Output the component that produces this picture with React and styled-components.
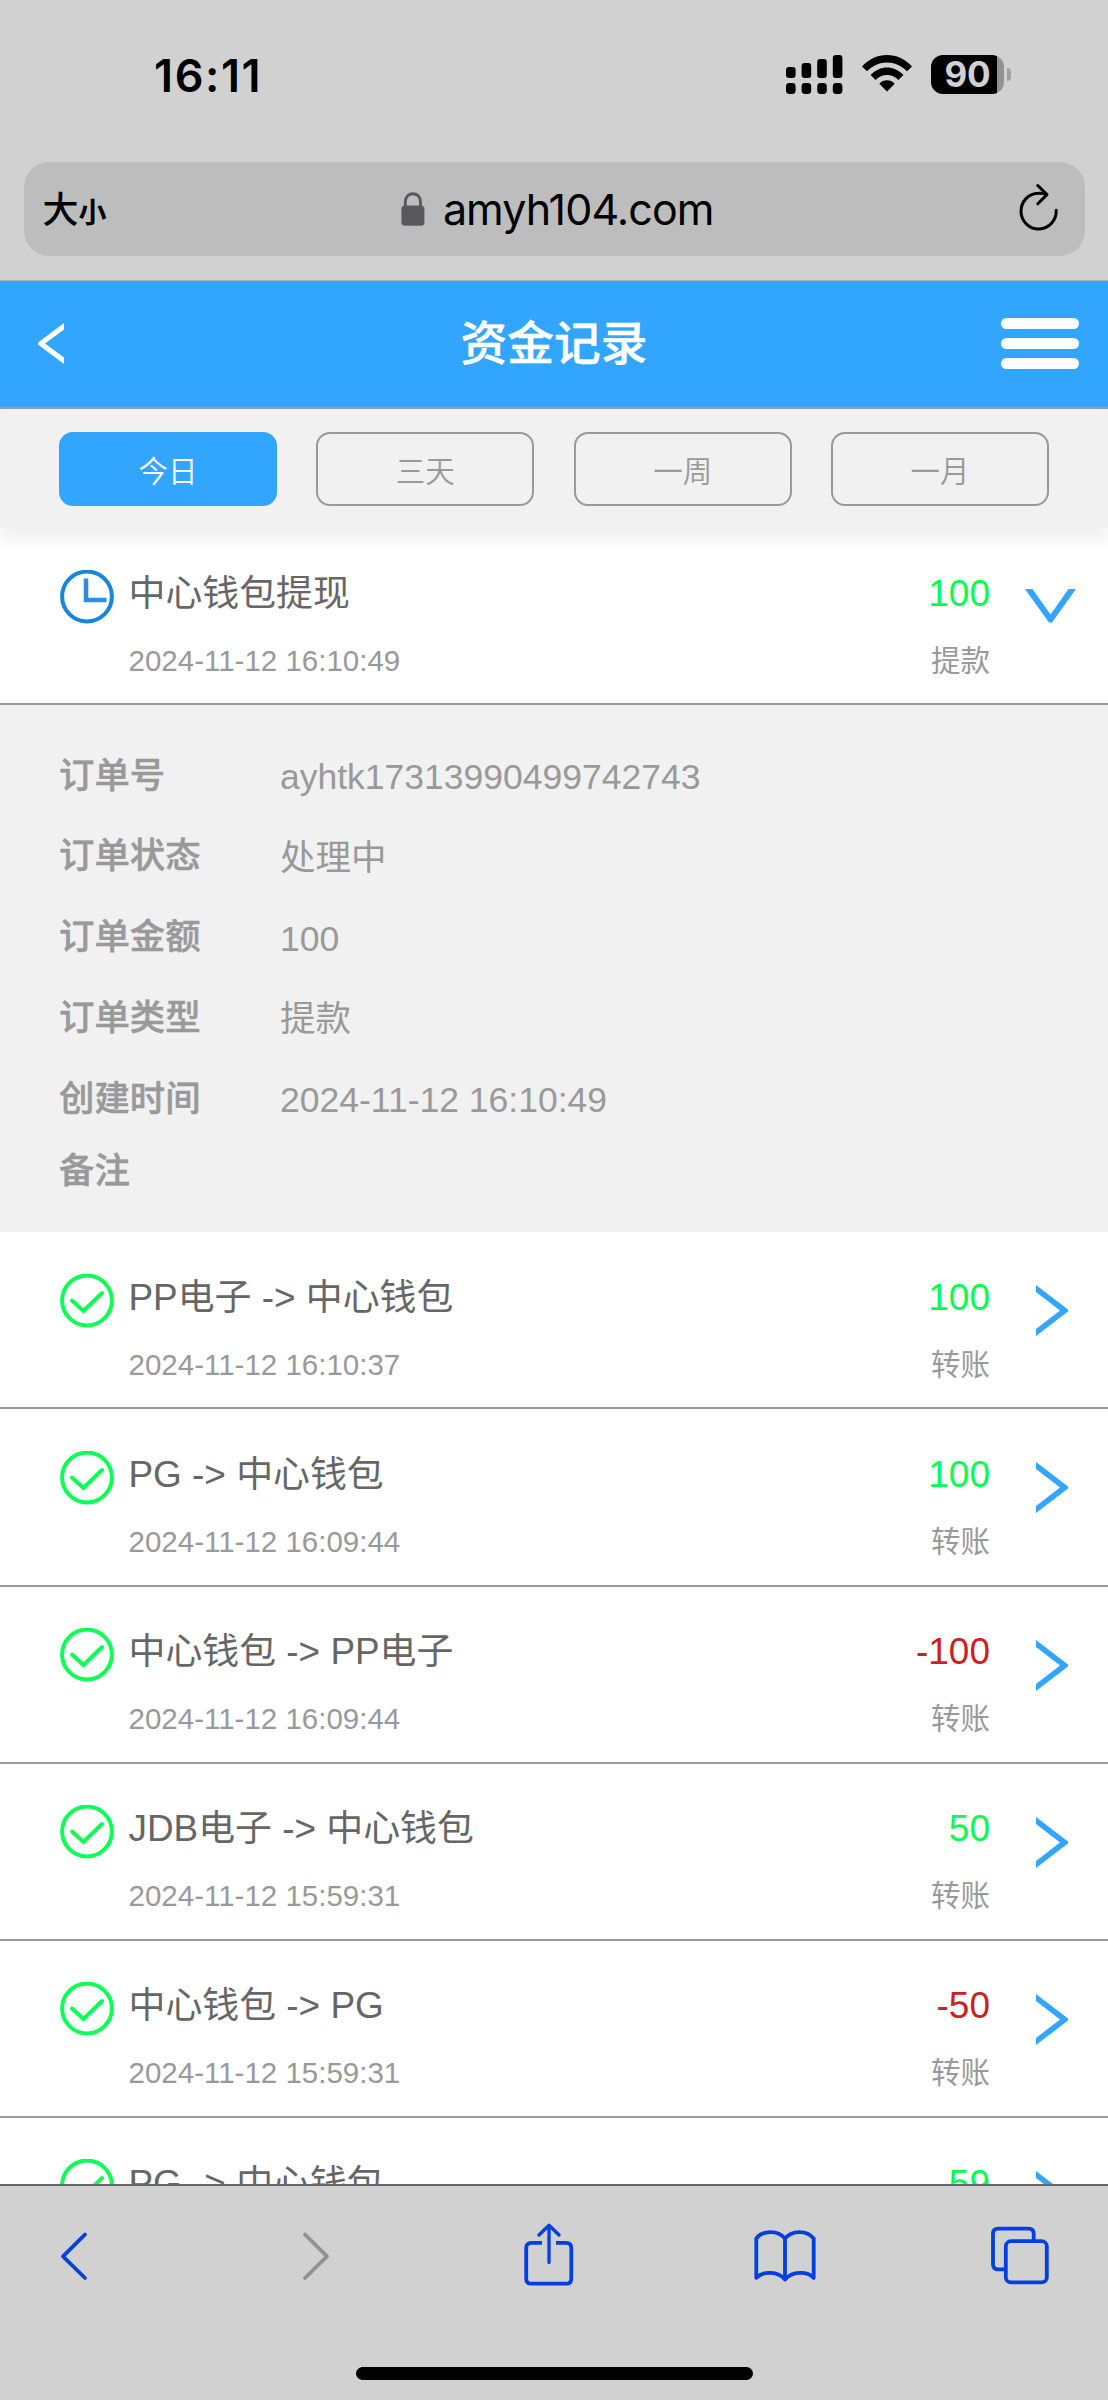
import styled, { createGlobalStyle } from "styled-components";

const ranges = ["今日", "三天", "一周", "一月"];

const details = [
  { label: "订单号", value: "ayhtk17313990499742743" },
  { label: "订单状态", value: "处理中" },
  { label: "订单金额", value: "100" },
  { label: "订单类型", value: "提款" },
  { label: "创建时间", value: "2024-11-12 16:10:49" },
];

const records = [
  { title: "PP电子 -> 中心钱包", time: "2024-11-12 16:10:37", amount: 100 },
  { title: "PG -> 中心钱包", time: "2024-11-12 16:09:44", amount: 100 },
  { title: "中心钱包 -> PP电子", time: "2024-11-12 16:09:44", amount: -100 },
  { title: "JDB电子 -> 中心钱包", time: "2024-11-12 15:59:31", amount: 50 },
  { title: "中心钱包 -> PG", time: "2024-11-12 15:59:31", amount: -50 },
  { title: "PG -> 中心钱包", amount: 59 },
];

const ClockIcon = () => (
  <svg width="54" height="54" viewBox="0 0 54 54" fill="none" stroke="#1487dc">
    <circle cx="27" cy="26.5" r="24.9" strokeWidth="4" />
    <path d="M26 8.5V30H46.5" strokeWidth="4.6" stroke="#2b8fdd" />
  </svg>
);

const CheckIcon = () => (
  <svg width="54" height="54" viewBox="0 0 54 54" fill="none" stroke="#0dff55">
    <circle cx="27" cy="26.5" r="24.9" strokeWidth="4" />
    <path d="M12 26.5L23.5 37L42 19" strokeWidth="4" strokeLinecap="round" />
  </svg>
);

const ChevronRight = () => (
  <svg width="32" height="51" viewBox="0 0 32 51">
    <path d="M0 0L32 24.5V26.5L0 51V44L24 25.5L0 7Z" fill="#32a5ff" />
  </svg>
);

const ChevronDown = () => (
  <svg width="51" height="34" viewBox="0 0 51 34">
    <path d="M0 0H7.5L25.5 25.5L43.5 0H51L27 33.5H24Z" fill="#32a5ff" />
  </svg>
);

const Record = ({ icon, title, time, amount, type, open }) => (
  <RecordRow>
    <IconSlot>{icon}</IconSlot>
    <RecordText>
      <RecordTitle>{title}</RecordTitle>
      {time && <RecordNote>{time}</RecordNote>}
    </RecordText>
    <RecordSide>
      <Amount $negative={amount < 0}>{amount}</Amount>
      {time && <RecordNote>{type}</RecordNote>}
    </RecordSide>
    <ArrowSlot $open={open}>{open ? <ChevronDown /> : <ChevronRight />}</ArrowSlot>
  </RecordRow>
);

const StatusBar = () => (
  <StatusWrapper>
    <Clock>16:11</Clock>
    <StatusIcons>
      <svg width="57" height="39" viewBox="0 0 57 39">
        {[12, 8, 4, 0].map((top, i) => (
          <g key={top}>
            <rect x={i * 15.6} y={top} width="9.6" height={23 - top} rx="3" />
            <rect x={i * 15.6} y="28" width="9.6" height="11" rx="3.4" />
          </g>
        ))}
      </svg>
      <svg width="50" height="37" viewBox="0 0 50 37">
        <path d="M0 11.5C14 -3.8 36 -3.8 50 11.5L45 16.3C34 4.6 16 4.6 5 16.3Z" />
        <path d="M8.6 20C18 10 32 10 41.4 20L36.4 25C30 18.3 20 18.3 13.6 25Z" />
        <path d="M17.3 28.7C21.5 24.2 28.5 24.2 32.7 28.7L25 36.5Z" />
      </svg>
      <Battery>
        <BatteryBody>90</BatteryBody>
        <BatteryCap />
      </Battery>
    </StatusIcons>
  </StatusWrapper>
);

const AddressBar = () => (
  <AddressWrapper>
    <TextSize>
      大<small>小</small>
    </TextSize>
    <Address>
      <svg width="24" height="34" viewBox="0 0 24 34">
        <rect x="0.4" y="13.5" width="23" height="20.3" rx="3.6" fill="#59585f" />
        <path
          d="M4.3 15V10C4.3 -1 19.5 -1 19.5 10V15"
          fill="none"
          stroke="#59585f"
          strokeWidth="2.9"
        />
      </svg>
      <span>amyh104.com</span>
    </Address>
    <svg
      width="40"
      height="48"
      viewBox="0 0 40 48"
      fill="none"
      stroke="#000"
      strokeWidth="3"
      strokeLinecap="round"
      strokeLinejoin="round"
    >
      <path d="M37.2 27.3A17.6 17.9 0 1 1 19.5 10.2C22.5 10 25 10.2 27.5 11.3" />
      <path d="M18.8 2.5L28 11.6L18.8 20.8" />
    </svg>
  </AddressWrapper>
);

const App = () => {
  return (
    <Screen>
      <GlobalStyle />
      <StatusBar />
      <AddressBar />
      <Header>
        <svg width="26" height="41" viewBox="0 0 26 41">
          <path d="M0 19.6L26 0V6.5L7 20.5L26 34.5V41L0 21.4Z" fill="#fff" />
        </svg>
        <Heading>资金记录</Heading>
        <Menu>
          <MenuLine />
          <MenuLine />
          <MenuLine />
        </Menu>
      </Header>
      <Ranges>
        {ranges.map((range, i) => (
          <RangeButton key={range} $active={i === 0}>
            {range}
          </RangeButton>
        ))}
      </Ranges>
      <Records>
        <Record
          icon={<ClockIcon />}
          title="中心钱包提现"
          time="2024-11-12 16:10:49"
          amount={100}
          type="提款"
          open
        />
        <Details>
          {details.map(({ label, value }) => (
            <DetailRow key={label}>
              <DetailLabel>{label}</DetailLabel>
              <DetailValue>{value}</DetailValue>
            </DetailRow>
          ))}
          <RemarkRow>
            <DetailLabel>备注</DetailLabel>
          </RemarkRow>
        </Details>
        {records.map((record, i) => (
          <Record key={i} icon={<CheckIcon />} type="转账" {...record} />
        ))}
      </Records>
      <Toolbar>
        <Tools>
          <svg width="28" height="64" viewBox="0 0 28 64">
            <path d="M25 11.5L3 33.3L25 55" />
          </svg>
          <DisabledTool width="28" height="64" viewBox="0 0 28 64">
            <path d="M3 11.5L25 33.3L3 55" />
          </DisabledTool>
          <svg width="50" height="64" viewBox="0 0 50 64">
            <path d="M18 19.8H7.5Q2.2 19.8 2.2 25.1V55.4Q2.2 60.7 7.5 60.7H42Q47.3 60.7 47.3 55.4V25.1Q47.3 19.8 42 19.8H32" strokeLinecap="butt" />
            <path d="M25 39.5V2.5M15 12L25 2.2L35 12" strokeWidth="3.3" />
          </svg>
          <svg width="62" height="64" viewBox="0 0 62 64">
            <path d="M31 15.5C24 7 9 7 2.3 15.5V54.8C9 48 24 48 31 56.5C38 48 53 48 59.7 54.8V15.5C53 7 38 7 31 15.5V56.5" />
          </svg>
          <svg width="58" height="64" viewBox="0 0 58 64">
            <rect x="14.8" y="18.2" width="41" height="41.2" rx="5.2" />
            <path d="M14 46.4H7.2Q2 46.4 2 41.2V10.9Q2 5.7 7.2 5.7H37.5Q42.7 5.7 42.7 10.9V17.5" strokeLinecap="butt" />
          </svg>
        </Tools>
        <HomeBar />
      </Toolbar>
    </Screen>
  );
};

const GlobalStyle = createGlobalStyle`
  * {
    box-sizing: border-box;
  }
  body {
    margin: 0;
    font-family: "Liberation Sans", "Noto Sans CJK SC", sans-serif;
  }
  svg {
    display: block;
    flex-shrink: 0;
  }
`;

const Screen = styled.div`
  display: flex;
  flex-direction: column;
  width: 1108px;
  height: 2400px;
  overflow: hidden;
  background-color: #d1d1d1;
`;

const StatusWrapper = styled.div`
  display: flex;
  flex-shrink: 0;
  justify-content: space-between;
  height: 162px;
  padding: 55px 97px 0 154px;
`;

const Clock = styled.div`
  font-family: Inter, sans-serif;
  font-size: 45px;
  font-weight: 600;
  line-height: 42px;
  letter-spacing: 1.6px;
`;

const StatusIcons = styled.div`
  display: flex;
  gap: 19px;
`;

const Battery = styled.div`
  display: flex;
  align-items: center;
  gap: 3px;
  height: 39px;
`;

const BatteryBody = styled.div`
  width: 73px;
  height: 39px;
  padding-left: 13.5px;
  border-radius: 12px;
  background: linear-gradient(to right, #000 66px, #929292 66px);
  color: #d1d1d1;
  font-family: Inter, sans-serif;
  font-size: 35px;
  font-weight: 700;
  line-height: 39px;
  letter-spacing: -0.3px;
`;

const BatteryCap = styled.div`
  width: 4px;
  height: 13px;
  border-radius: 0 4px 4px 0;
  background-color: #a0a0a0;
`;

const AddressWrapper = styled.div`
  display: flex;
  flex-shrink: 0;
  align-items: center;
  justify-content: space-between;
  height: 94px;
  margin: 0 23px 24px 23.5px;
  padding: 0 26px 4px 19px;
  border-radius: 25px;
  background-color: #bdbdbd;
`;

const TextSize = styled.div`
  width: 66px;
  padding-top: 4px;
  font-family: "Noto Sans CJK SC", sans-serif;
  font-size: 36px;
  font-weight: 500;
  line-height: 48px;
  white-space: nowrap;
  small {
    font-size: 28px;
    font-weight: 700;
  }
`;

const Address = styled.div`
  display: flex;
  align-items: center;
  gap: 17.5px;
  margin-right: 12.5px;
  padding-top: 3px;
  font-family: Inter, sans-serif;
  font-size: 43px;
  line-height: 48px;
  letter-spacing: -0.9px;
`;

const Header = styled.header`
  display: flex;
  flex-shrink: 0;
  align-items: center;
  justify-content: space-between;
  height: 129px;
  padding: 0 29px 1px 38px;
  border-top: 1px solid #b0b0b0;
  border-bottom: 2px solid #999;
  background-color: #32a5ff;
`;

const Heading = styled.h1`
  margin: 0 0 0 43px;
  color: #fff;
  font-size: 46.7px;
  font-weight: 500;
  line-height: 60px;
  -webkit-text-stroke: 0.5px #fff;
`;

const Menu = styled.div`
  display: flex;
  flex-direction: column;
  gap: 9px;
`;

const MenuLine = styled.div`
  width: 78px;
  height: 11px;
  border-radius: 6px;
  background-color: #fff;
`;

const Ranges = styled.div`
  position: relative;
  z-index: 1;
  display: flex;
  flex-shrink: 0;
  gap: 39.4px;
  height: 119px;
  padding: 23px 59px 0;
  background-color: #f1f1f1;
  box-shadow: 0 12px 14px #f1f1f1;
`;

const RangeButton = styled.button`
  flex: 1;
  height: 74px;
  padding: 0;
  border: 2px solid ${(props) => (props.$active ? "#32a5ff" : "#999")};
  border-radius: 14px;
  background-color: ${(props) => (props.$active ? "#32a5ff" : "transparent")};
  color: ${(props) => (props.$active ? "#fff" : "#999")};
  font-family: "Noto Sans CJK SC", sans-serif;
  font-size: 29.5px;
  font-weight: 350;
  line-height: 69px;
`;

const Records = styled.main`
  flex: 1;
  min-height: 0;
  overflow: hidden;
  background-color: #fff;
`;

const RecordRow = styled.div`
  display: flex;
  height: 177.1px;
  padding-left: 59.5px;
  border-bottom: 2px solid #999;
`;

const IconSlot = styled.div`
  width: 69px;
  padding-top: 41.5px;
`;

const RecordText = styled.div`
  flex: 1;
  padding-top: 43.7px;
`;

const RecordSide = styled.div`
  padding-top: 43.7px;
  text-align: right;
`;

const RecordTitle = styled.div`
  margin-bottom: 27px;
  color: #666;
  font-size: 36.9px;
  line-height: 44px;
`;

const Amount = styled.div`
  margin-bottom: 27px;
  color: ${(props) => (props.$negative ? "#cc1f1f" : "#05ff50")};
  font-size: 37px;
  line-height: 44px;
`;

const RecordNote = styled.div`
  color: #999;
  font-size: 29.5px;
  line-height: 36px;
`;

const ArrowSlot = styled.div`
  width: 118px;
  padding: ${(props) => (props.$open ? "61px 0 0 35px" : "53px 0 0 46px")};
`;

const Details = styled.div`
  height: 527.3px;
  padding: 32px 59px 0;
  background-color: #f1f1f1;
`;

const DetailRow = styled.div`
  display: flex;
  height: 80.8px;
  line-height: 74px;
`;

const RemarkRow = styled(DetailRow)`
  margin-top: -9px;
`;

const DetailLabel = styled.div`
  width: 221px;
  padding-top: 1.5px;
  color: #999;
  font-size: 35.4px;
  font-weight: 500;
  -webkit-text-stroke: 0.5px #999;
`;

const DetailValue = styled.div`
  padding-top: 3px;
  color: #999;
  font-size: 35.5px;
`;

const Toolbar = styled.footer`
  display: flex;
  flex-direction: column;
  flex-shrink: 0;
  align-items: center;
  justify-content: space-between;
  height: 216px;
  padding-bottom: 20px;
  border-top: 2px solid #666;
  background-color: #d1d1d1;
`;

const Tools = styled.div`
  display: grid;
  grid-template-columns: 241.5px 222px 230px 237.5px 58px;
  width: 100%;
  padding: 36.5px 0 0 60px;
  svg {
    fill: none;
    stroke: #0040e0;
    stroke-width: 3.8;
    stroke-linecap: round;
    stroke-linejoin: round;
  }
`;

const DisabledTool = styled.svg`
  && {
    stroke: #919191;
  }
`;

const HomeBar = styled.div`
  width: 397px;
  height: 13px;
  border-radius: 7px;
  background-color: #000;
`;

export default App;
